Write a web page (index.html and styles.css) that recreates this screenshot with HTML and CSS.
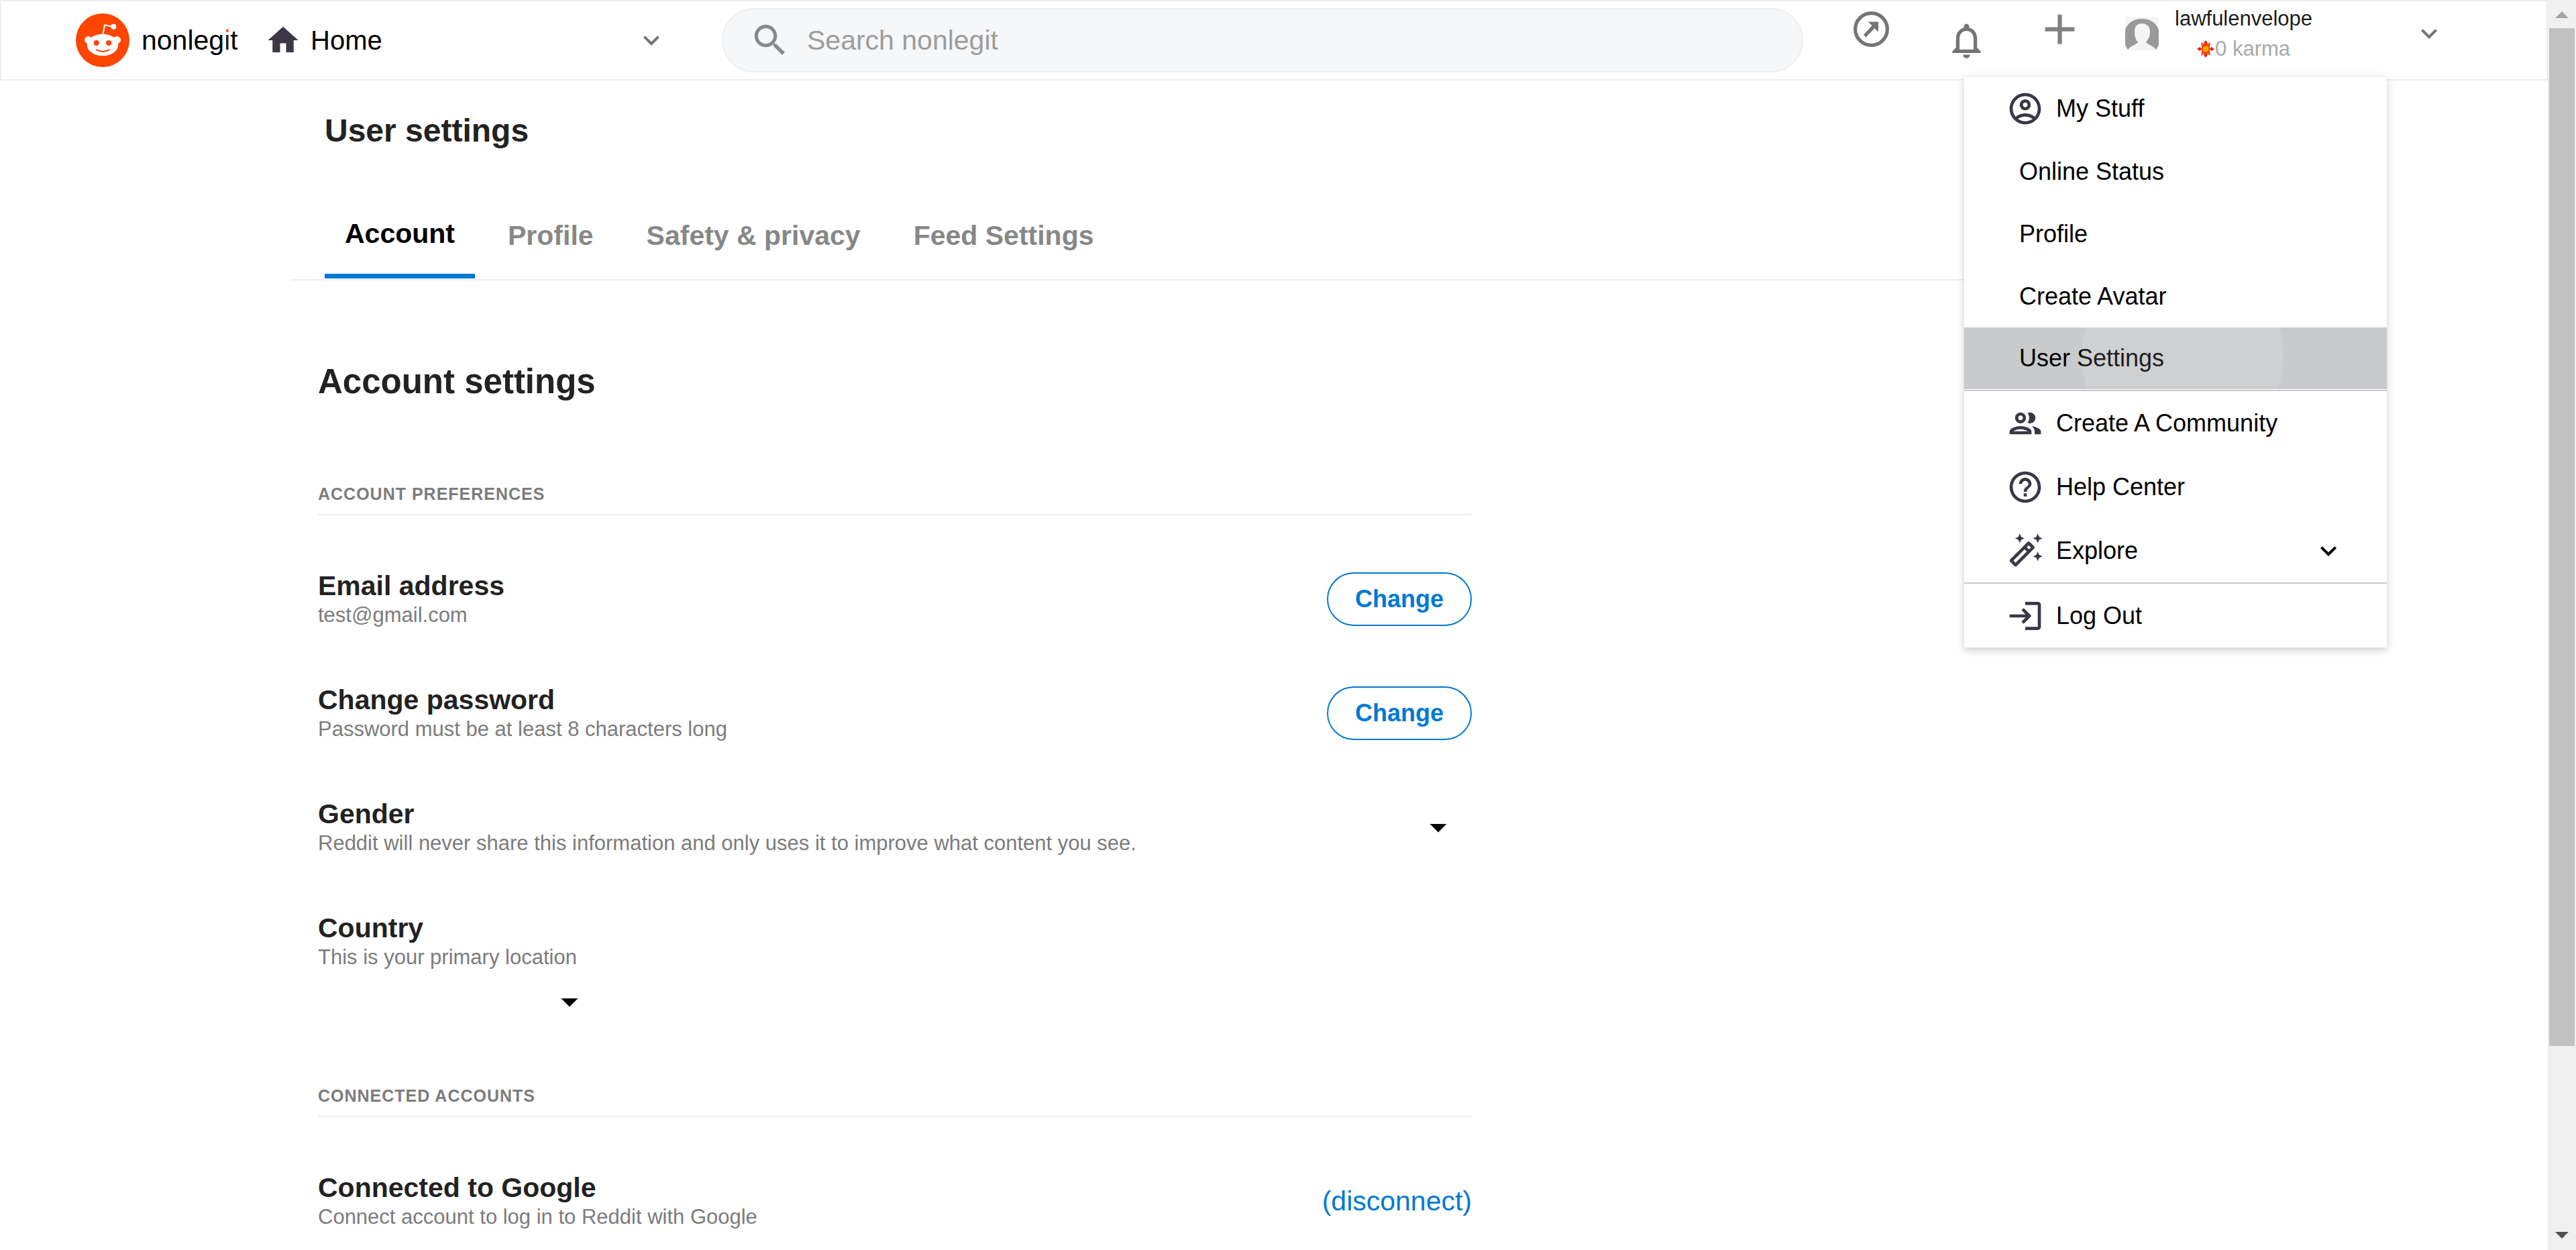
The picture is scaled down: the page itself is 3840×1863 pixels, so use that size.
FILE: index.html
```html
<!DOCTYPE html>
<html lang="en">
<head>
<meta charset="utf-8">
<title>User settings - nonlegit</title>
<link rel="stylesheet" href="styles.css">
</head>
<body>
<div class="app">
  <header class="topbar">
    <a class="brand" href="#">
      <svg class="brand-logo" viewBox="0 0 80 80" aria-hidden="true">
        <circle cx="40" cy="40" r="40" fill="#ff4500"/>
        <g fill="#fff">
          <circle cx="18.7" cy="39.6" r="5.6"/>
          <circle cx="61.4" cy="39.6" r="5.6"/>
          <ellipse cx="40" cy="47" rx="23.2" ry="16.3"/>
          <circle cx="56.3" cy="19.8" r="4"/>
        </g>
        <path d="M40.3 31.5 43 17.2l12 2.6" fill="none" stroke="#fff" stroke-width="2" stroke-linejoin="round"/>
        <circle cx="30.7" cy="44" r="4.1" fill="#ff4500"/>
        <circle cx="49.1" cy="44" r="4.1" fill="#ff4500"/>
        <path d="M31 54.2q9.2 5.600 18.600 0" fill="none" stroke="#ff4500" stroke-width="2" stroke-linecap="round"/>
      </svg>
      <span class="brand-name">nonleg<span class="brand-i">i</span>t</span>
    </a>
    <button class="feed-picker" type="button">
      <svg class="icon-home" viewBox="0 0 24 24" aria-hidden="true"><path d="M10 20v-6h4v6h5v-8h3L12 3 2 12h3v8z"/></svg>
      <span class="feed-name">Home</span>
      <svg class="icon-chevron" viewBox="0 0 24 24" aria-hidden="true"><path d="M7.41 8.59 12 13.170l4.590-4.580L18 10l-6 6-6-6z"/></svg>
    </button>
    <label class="search">
      <svg class="icon-search" viewBox="0 0 24 24" aria-hidden="true"><path d="M15.5 14h-.79l-.28-.27C15.41 12.59 16 11.11 16 9.5 16 5.91 13.09 3 9.5 3S3 5.91 3 9.5 5.91 16 9.5 16c1.61 0 3.09-.59 4.23-1.57l.27.28v.79l5 4.99L20.49 19l-4.99-5zm-6 0C7.01 14 5 11.99 5 9.5S7.01 5 9.5 5 14 7.01 14 9.5 11.99 14 9.5 14z"/></svg>
      <input class="search-input" type="search" placeholder="Search nonlegit" aria-label="Search nonlegit">
    </label>
    <div class="actions">
      <button class="action raised" type="button" aria-label="Popular">
        <svg class="icon-popular" viewBox="0 0 53 53" aria-hidden="true"><circle cx="26.500" cy="26.500" r="23.900" fill="none" stroke="#757575" stroke-width="5.200"/><path d="M21.500 15.500H37v15.300l-5.600-5.600L18.600 38.400 15 35 27.500 21z"/></svg>
      </button>
      <button class="action action-bell" type="button" aria-label="Notifications">
        <svg class="icon-bell" viewBox="0 0 24 24" aria-hidden="true"><path d="M12 22c1.1 0 2-.9 2-2h-4c0 1.1.9 2 2 2zm6-6v-5c0-3.07-1.63-5.64-4.500-6.320V4c0-.83-.67-1.500-1.500-1.500s-1.500.67-1.500 1.500v.68C7.64 5.36 6 7.920 6 11v5l-2 2v1h16v-1l-2-2zm-2 1H8v-6c0-2.480 1.510-4.500 4-4.500s4 2.020 4 4.500v6z"/></svg>
      </button>
      <button class="action raised" type="button" aria-label="Create post">
        <svg class="icon-plus" viewBox="0 0 24 24" aria-hidden="true"><path d="M19 13h-6v6h-2v-6H5v-2h6V5h2v6h6z"/></svg>
      </button>
    </div>
    <button class="account" type="button">
      <svg class="avatar" viewBox="0 0 50 50" aria-hidden="true">
        <rect width="50" height="50" fill="#f5f5f5"/>
        <path fill="#999" d="M0 20C3 9 13 3 25 3s22 6 25 17v22l-4 7c-5-6-11-7-15-11 5-6 6-11 6-16 0-8-5-12-12-12s-11 4-11 12c0 6 1 11 5 16-4 4-10 5-15 11l-4-7z"/>
      </svg>
      <span class="account-text">
        <span class="account-name">lawfulenvelope</span>
        <span class="karma">
          <svg class="icon-karma" viewBox="0 0 26 26" aria-hidden="true">
            <path fill="#ff4500" d="m6 3 5 3h4l5-3-1 7v6l1 7-5-3h-4l-5 3 1-7v-6z"/>
            <path fill="#e8251b" d="m13 0 3 4-3 4-3-4zM13 18l3 4-3 4-3-4zM0 13l4-3 4 3-4 3zM18 13l4-3 4 3-4 3z"/>
            <circle cx="13" cy="13" r="4.500" fill="#ffa800"/>
          </svg>
          <span>0 karma</span>
        </span>
      </span>
      <svg class="icon-chevron" viewBox="0 0 24 24" aria-hidden="true"><path d="M7.410 8.590 12 13.170l4.590-4.580L18 10l-6 6-6-6z"/></svg>
    </button>

    <nav class="menu" aria-label="Account menu">
      <a class="menu-item" href="#">
        <svg class="menu-icon" viewBox="0 0 24 24" aria-hidden="true"><path d="M12 2C6.480 2 2 6.480 2 12s4.480 10 10 10 10-4.480 10-10S17.520 2 12 2zM7.350 18.500C8.660 17.560 10.260 17 12 17s3.340.56 4.650 1.500c-1.310.94-2.910 1.500-4.650 1.500s-3.340-.56-4.650-1.500zm10.790-1.380C16.450 15.800 14.320 15 12 15s-4.450.8-6.140 2.120C4.700 15.730 4 13.950 4 12c0-4.420 3.580-8 8-8s8 3.580 8 8c0 1.950-.7 3.730-1.860 5.120zM12 6c-1.930 0-3.500 1.570-3.500 3.500S10.070 13 12 13s3.500-1.570 3.500-3.500S13.930 6 12 6zm0 5c-.83 0-1.500-.67-1.500-1.500S11.170 8 12 8s1.500.67 1.500 1.500S12.830 11 12 11z"/></svg>
        <span>My Stuff</span>
      </a>
      <a class="menu-item sub" href="#">Online Status</a>
      <a class="menu-item sub" href="#">Profile</a>
      <a class="menu-item sub" href="#">Create Avatar</a>
      <a class="menu-item sub selected" href="#">User Settings<span class="ripple"></span></a>
      <a class="menu-item divided" href="#">
        <svg class="menu-icon" viewBox="0 0 24 24" aria-hidden="true"><path d="M9 13.750c-2.340 0-7 1.170-7 3.500V19h14v-1.750c0-2.330-4.660-3.500-7-3.500zM4.340 17c.84-.58 2.870-1.250 4.660-1.250s3.820.67 4.660 1.250H4.340zM9 12c1.930 0 3.500-1.570 3.500-3.500S10.930 5 9 5 5.500 6.570 5.500 8.500 7.070 12 9 12zm0-5c.83 0 1.500.67 1.500 1.500S9.830 10 9 10s-1.500-.67-1.500-1.500S8.170 7 9 7zm7.040 6.810c1.160.84 1.960 1.960 1.960 3.440V19h4v-1.750c0-2.020-3.500-3.170-5.960-3.440zM15 12c1.930 0 3.500-1.570 3.500-3.500S16.930 5 15 5c-.54 0-1.040.13-1.500.35.63.89 1 1.980 1 3.150s-.37 2.260-1 3.150c.46.22.96.35 1.500.35z"/></svg>
        <span>Create A Community</span>
      </a>
      <a class="menu-item" href="#">
        <svg class="menu-icon" viewBox="0 0 24 24" aria-hidden="true"><path d="M11 18h2v-2h-2v2zm1-16C6.480 2 2 6.480 2 12s4.480 10 10 10 10-4.480 10-10S17.520 2 12 2zm0 18c-4.410 0-8-3.590-8-8s3.590-8 8-8 8 3.590 8 8-3.590 8-8 8zm0-14c-2.210 0-4 1.790-4 4h2c0-1.100.9-2 2-2s2 .9 2 2c0 2-3 1.750-3 5h2c0-2.250 3-2.500 3-5 0-2.210-1.790-4-4-4z"/></svg>
        <span>Help Center</span>
      </a>
      <a class="menu-item" href="#">
        <svg class="menu-icon" viewBox="0 0 24 24" aria-hidden="true"><path fill-rule="evenodd" d="m20 7 .94-2.060L23 4l-2.060-.94L20 1l-.94 2.060L17 4l2.060.94zM8.500 7l.94-2.060L11.500 4l-2.060-.94L8.500 1l-.94 2.060L5.500 4l2.060.94zM20 12.500l-.94 2.060-2.060.94 2.060.94.94 2.060.94-2.060 2.060-.94-2.060-.94zM17.710 9.120l-2.830-2.830C14.680 6.100 14.430 6 14.170 6c-.26 0-.51.1-.71.29L2.290 17.460c-.39.39-.39 1.020 0 1.410l2.830 2.830c.2.2.45.3.71.3s.51-.1.71-.29l11.170-11.170c.39-.39.39-1.030 0-1.420zm-3.540-.7 1.410 1.410L14.410 11 13 9.590zM5.830 19.590l-1.410-1.410L11.590 11 13 12.410z"/></svg>
        <span>Explore</span>
        <svg class="icon-chevron menu-chevron" viewBox="0 0 24 24" aria-hidden="true"><path d="M7.410 8.590 12 13.170l4.590-4.580L18 10l-6 6-6-6z"/></svg>
      </a>
      <a class="menu-item divided" href="#">
        <svg class="menu-icon" viewBox="0 0 24 24" aria-hidden="true"><path d="M11 7 9.600 8.400l2.600 2.600H2v2h10.200l-2.600 2.600L11 17l5-5zm9 12h-8v2h8c1.100 0 2-.9 2-2V5c0-1.100-.9-2-2-2h-8v2h8z"/></svg>
        <span>Log Out</span>
      </a>
    </nav>
  </header>

  <main class="settings">
    <h1 class="page-title">User settings</h1>
    <nav class="tabs" aria-label="Settings sections">
      <a class="tab active" href="#">Account</a>
      <a class="tab" href="#">Profile</a>
      <a class="tab" href="#">Safety &amp; privacy</a>
      <a class="tab" href="#">Feed Settings</a>
    </nav>
    <div class="panel">
      <h2 class="panel-title">Account settings</h2>

      <section class="group">
        <h3 class="group-title">ACCOUNT PREFERENCES</h3>
        <div class="rows">
          <div class="row">
            <div><h4 class="row-title">Email address</h4><p class="row-note">test@gmail.com</p></div>
            <button class="pill" type="button">Change</button>
          </div>
          <div class="row">
            <div><h4 class="row-title">Change password</h4><p class="row-note">Password must be at least 8 characters long</p></div>
            <button class="pill" type="button">Change</button>
          </div>
          <div class="row">
            <div><label class="row-title" for="gender">Gender</label><p class="row-note">Reddit will never share this information and only uses it to improve what content you see.</p></div>
            <div class="select-box">
              <select class="select" id="gender"><option></option></select>
              <svg class="select-arrow" viewBox="0 0 24 24" aria-hidden="true"><path d="m7 10 5 5 5-5z"/></svg>
            </div>
          </div>
          <div>
            <label class="row-title" for="country">Country</label><p class="row-note">This is your primary location</p>
            <div class="select-box wide">
              <select class="select" id="country"><option></option></select>
              <svg class="select-arrow" viewBox="0 0 24 24" aria-hidden="true"><path d="m7 10 5 5 5-5z"/></svg>
            </div>
          </div>
        </div>
      </section>

      <section class="group later">
        <h3 class="group-title">CONNECTED ACCOUNTS</h3>
        <div class="rows">
          <div class="row">
            <div><h4 class="row-title">Connected to Google</h4><p class="row-note">Connect account to log in to Reddit with Google</p></div>
            <a class="disconnect" href="#">(disconnect)</a>
          </div>
        </div>
      </section>
    </div>
  </main>
</div>
<div class="scrollbar" aria-hidden="true">
  <svg class="scroll-arrow" viewBox="0 0 42 42"><path fill="#a3a3a3" d="M11 27h20L21 17z"/></svg>
  <div class="scroll-track"><div class="scroll-thumb"></div></div>
  <svg class="scroll-arrow" viewBox="0 0 42 42"><path fill="#505050" d="M11 15h20L21 25z"/></svg>
</div>
</body>
</html>
```
FILE: styles.css
```css
* { box-sizing: border-box; }

body {
  display: grid;
  grid-template-columns: 1fr 42px;
  height: 100vh;
  margin: 0;
  overflow: hidden;
  background: #fff;
  color: #000;
  font-family: "Liberation Sans", Arial, sans-serif;
}

h1, h2, h3, h4, p { margin: 0; }
a { color: inherit; text-decoration: none; }
svg { display: block; flex: none; fill: currentColor; }

button {
  padding: 0;
  border: 0;
  background: none;
  font: inherit;
  color: inherit;
  cursor: pointer;
}

.app { min-width: 0; overflow: hidden; }

/* Top bar */
.topbar {
  position: relative;
  display: flex;
  align-items: center;
  height: 120px;
  padding: 0 151px 0 111px;
  border: 2px solid #eee;
}

.brand {
  display: flex;
  align-items: center;
  gap: 18px;
  flex: none;
  width: 282px;
}
.brand-logo { width: 80px; height: 80px; }
.brand-name {
  font-size: 41px;
  line-height: 60px;
}
.brand-i {
  background: linear-gradient(#ff4500 13px, #222 13px);
  background-clip: text;
  color: transparent;
}

.feed-picker {
  display: flex;
  align-items: center;
  flex: none;
  width: 600px;
  color: #3c3744;
}
.icon-home { width: 54px; height: 54px; }
.feed-name {
  margin-left: 14px;
  color: #000;
  font-size: 40px;
  line-height: 48px;
}
.icon-chevron { width: 48px; height: 48px; margin-left: auto; color: #757575; }

.search {
  display: flex;
  align-items: center;
  gap: 24px;
  flex: 1;
  height: 96px;
  margin: 0 75px 0 81px;
  padding: 0 39px;
  border: 2px solid #edeff1;
  border-radius: 48px;
  background: #f6f7f9;
  color: #878a8c;
}
.icon-search { width: 62px; height: 62px; }
.search-input {
  flex: 1;
  min-width: 0;
  padding: 0;
  border: 0;
  outline: 0;
  background: none;
  font: 41px/48px "Liberation Sans", Arial, sans-serif;
}
.search-input::placeholder { color: #9c9d9c; }

.actions { display: flex; align-items: center; color: #757575; }
.raised { margin-bottom: 34px; }
.action-bell { margin: 0 70px 0 84px; }
.icon-popular { width: 53px; height: 53px; }
.icon-bell { width: 63px; height: 63px; }
.icon-plus { width: 75px; height: 75px; color: #808080; }

.account {
  display: flex;
  align-items: center;
  flex: none;
  width: 477px;
  margin: 0 0 20px 60px;
}
.avatar { width: 50px; height: 50px; }
.account-text {
  display: flex;
  flex-direction: column;
  align-items: center;
  margin-left: 24px;
  color: #1c1c1c;
  font-size: 31px;
  line-height: 45px;
}
.karma { display: flex; align-items: center; gap: 1px; color: #a8aaab; }
.icon-karma { width: 26px; height: 26px; }

/* Account menu */
.menu {
  position: absolute;
  z-index: 1;
  top: 113px;
  right: 238px;
  width: 630px;
  background: #fff;
  box-shadow: 0 5px 10px rgba(0, 0, 0, .15), 0 0 16px rgba(0, 0, 0, .06);
  font-size: 36px;
  line-height: 44px;
}
.menu-item {
  display: flex;
  align-items: center;
  gap: 18px;
  height: 95px;
  padding: 0 63px;
}
.menu-item:first-child { height: 94px; }
.menu-item.sub { height: 93px; padding: 0 82px; }
.menu-item.divided { height: 97px; border-top: 2px solid #c9cacc; }
.menu-item.selected {
  position: relative;
  height: 92px;
  margin-bottom: 1px;
  overflow: hidden;
  background: #c9cacc;
}
.ripple {
  position: absolute;
  top: -108px;
  left: 175px;
  width: 301px;
  height: 301px;
  border-radius: 50%;
  background: rgba(255, 255, 255, .12);
}
.menu-icon { width: 56px; height: 56px; color: #3c3744; }
.menu-chevron { color: #000; }

/* Settings page */
.settings { padding: 45px 434px 0; }
.page-title {
  padding-left: 50px;
  color: #222;
  font-size: 48px;
  line-height: 60px;
}

.tabs {
  display: flex;
  gap: 19px;
  height: 94px;
  margin-top: 99px;
  padding-left: 50px;
  border-bottom: 2px solid #eee;
}
.tab {
  padding: 3px 30px 0;
  color: #878787;
  font-size: 41px;
  font-weight: bold;
  line-height: 48px;
}
.tab.active {
  margin-bottom: 1px;
  padding-top: 0;
  border-bottom: 7px solid #0079d3;
  color: #000;
}

.panel { max-width: 1760px; padding: 121px 0 0 40px; }
.panel-title { color: #222; font-size: 51px; line-height: 60px; }

.group { margin-top: 122px; }
.group.later { margin-top: 95px; }
.group-title {
  padding-bottom: 15px;
  border-bottom: 2px solid #eee;
  color: #7c7c7c;
  font-size: 25px;
  letter-spacing: 1px;
  line-height: 30px;
}
.rows {
  display: flex;
  flex-direction: column;
  gap: 82px;
  margin-top: 81px;
}
.row {
  display: flex;
  align-items: center;
  justify-content: space-between;
}
.row-title {
  display: block;
  color: #222;
  font-size: 41px;
  font-weight: bold;
  line-height: 48px;
}
.row-note { color: #7c7c7c; font-size: 31px; line-height: 40px; }

.pill {
  width: 216px;
  height: 80px;
  border: 2px solid #0079d3;
  border-radius: 40px;
  color: #0079d3;
  font-size: 36px;
  font-weight: bold;
}

.select-box { position: relative; width: 200px; height: 60px; }
.select-box.wide { width: 425px; margin-top: 16px; }
.select {
  width: 100%;
  height: 100%;
  border: 0;
  appearance: none;
  background: none;
  font-size: 41px;
}
.select-arrow {
  position: absolute;
  top: 0;
  right: 20px;
  width: 60px;
  height: 60px;
  pointer-events: none;
}

.disconnect { color: #0079d3; font-size: 41px; line-height: 48px; }

/* Page scrollbar */
.scrollbar {
  display: flex;
  flex-direction: column;
  height: 100vh;
  background: #f0f0f0;
}
.scroll-arrow { width: 42px; height: 42px; }
.scroll-track { flex: 1; padding: 0 2px; }
.scroll-thumb { height: 85.3%; background: #c1c1c1; }
```
